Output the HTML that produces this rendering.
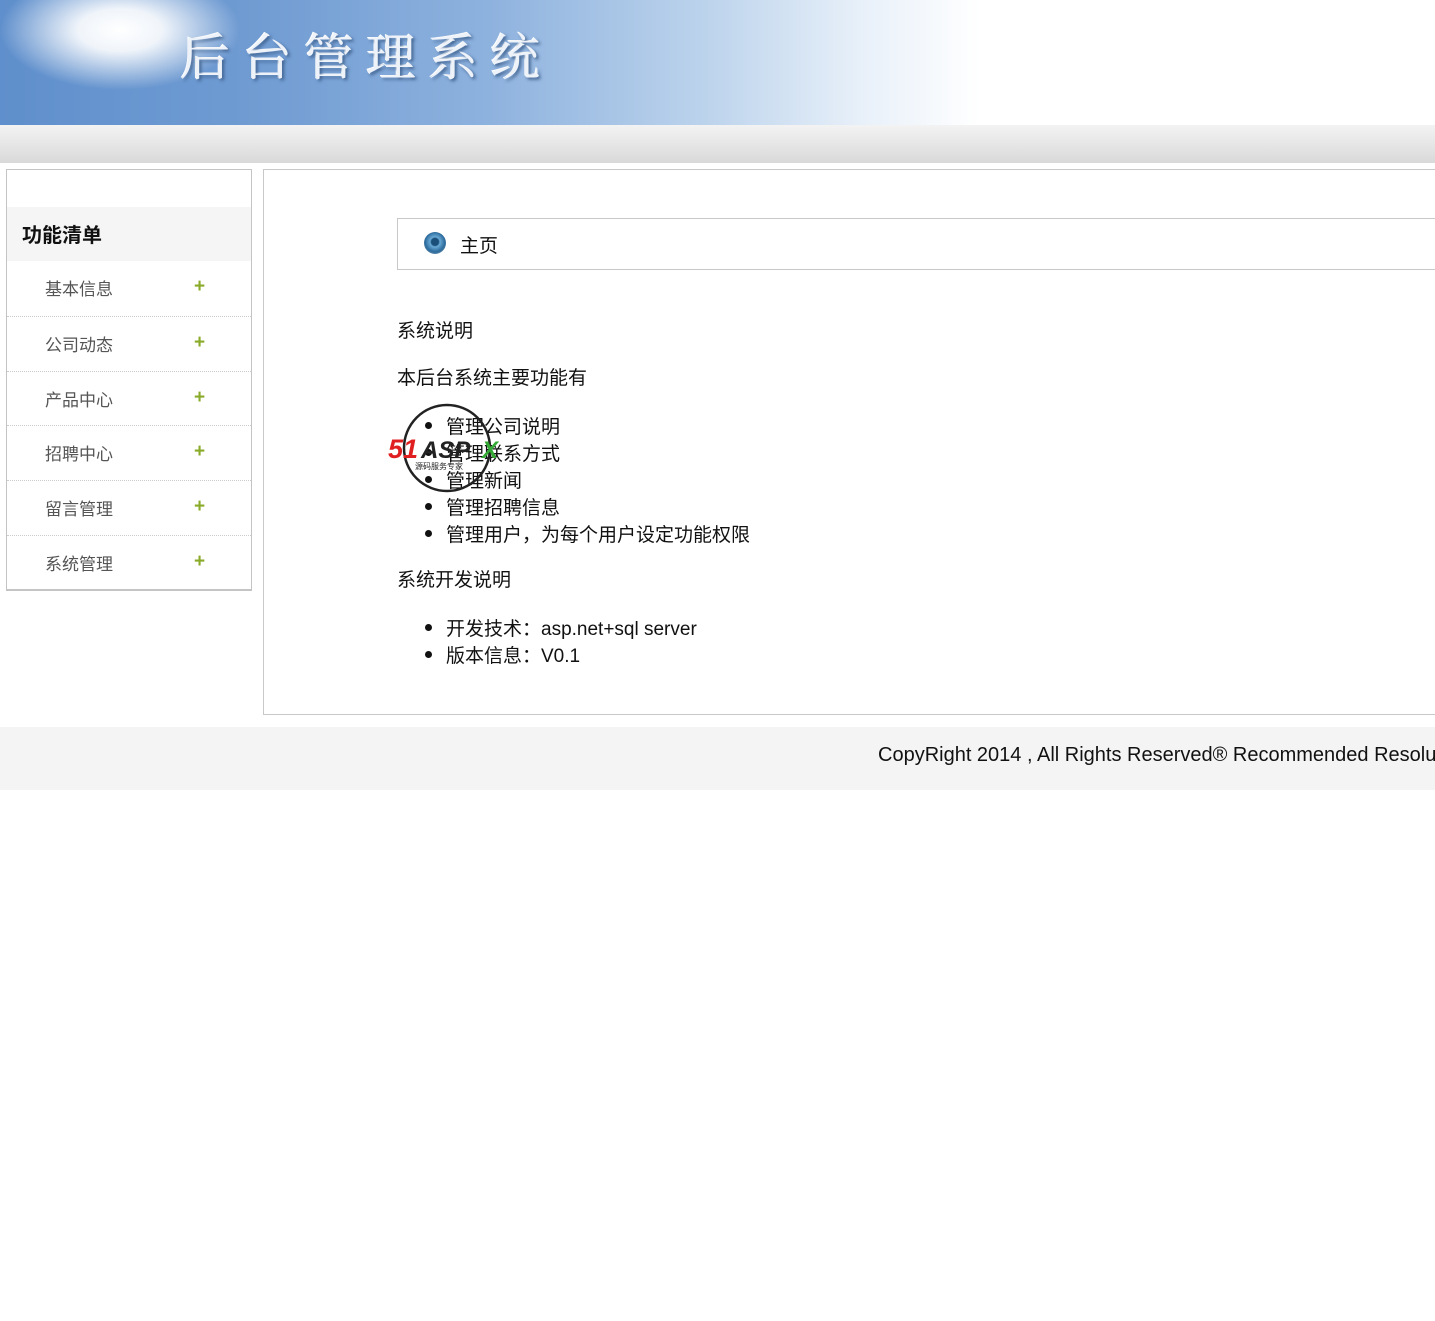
<!DOCTYPE html>
<html><head><meta charset="utf-8"><style>
*{margin:0;padding:0;box-sizing:border-box}
body{width:1435px;height:1321px;background:#fff;font-family:"Liberation Sans","Noto Sans CJK SC",sans-serif;position:relative;overflow:hidden}
.banner{position:absolute;left:0;top:0;width:1435px;height:125px;background:#fff}
.bimg{position:absolute;left:0;top:0;width:980px;height:125px;
background:radial-gradient(ellipse 120px 60px at 120px 30px,#fff 0%,rgba(255,255,255,.9) 35%,rgba(255,255,255,0) 100%),
linear-gradient(90deg,#5f8fcc 0%,#6f9bd2 25%,#8eb2de 50%,#bcd3ec 72%,#e8f0f9 88%,#fff 100%)}
.btitle{position:absolute;left:180px;top:18px;font-family:"Noto Serif CJK SC","Liberation Serif",serif;font-size:50px;letter-spacing:12px;color:#eef3fa;text-shadow:2px 2px 3px #3d5f8c,-1px -1px 0 #fff}
.bar{position:absolute;left:0;top:125px;width:1435px;height:38px;background:linear-gradient(#f3f3f3,#d9d9d9)}
.side{position:absolute;left:6px;top:169px;width:246px;height:422px;border:1px solid #c4c4c4;border-bottom:2px solid #c4c4c4}
.sh{position:absolute;left:0;top:37px;width:244px;height:54px;background:#f5f5f5;font-weight:bold;font-size:20px;padding:12px 0 0 15px;color:#111}
.it{position:absolute;left:0;width:244px;height:55px;border-top:1px dotted #ccc;font-size:17px;color:#555;padding:14px 0 0 38px}
.it b{position:absolute;left:187px;top:15px;color:#8aab2a;font-size:19px}
.main{position:absolute;left:263px;top:169px;width:1200px;height:546px;border:1px solid #c8c8c8}
.crumb{position:absolute;left:133px;top:48px;width:1100px;height:52px;border:1px solid #c8c8c8;font-size:19px;padding:12px 0 0 62px;color:#111}
.ico{position:absolute;left:26px;top:13px;width:22px;height:22px;border-radius:50%;background:radial-gradient(circle at 50% 45%,#1a4f7a 0 22%,#6aaad6 30%,#2c6b9c 60%,#9ab 100%)}
.c{position:absolute;left:133px;font-size:19px;color:#111;line-height:27px}
ul{list-style:disc;padding-left:49px}
li{height:27px}
li::marker{font-size:24px}
.foot{position:absolute;left:0;top:727px;width:1435px;height:63px;background:#f4f4f4;font-size:20px;color:#111;padding:17px 0 0 878px;white-space:nowrap}
.wm{position:absolute;left:388px;top:402px;width:120px;height:92px}
</style></head><body>
<div class="banner"><div class="bimg"></div><div class="btitle">后台管理系统</div></div>
<div class="bar"></div>
<div class="side">
<div class="sh">功能清单</div>
<div class="it" style="top:91px;border-top:none">基本信息<b>+</b></div>
<div class="it" style="top:146px">公司动态<b>+</b></div>
<div class="it" style="top:201px">产品中心<b>+</b></div>
<div class="it" style="top:255px">招聘中心<b>+</b></div>
<div class="it" style="top:310px">留言管理<b>+</b></div>
<div class="it" style="top:365px">系统管理<b>+</b></div>
</div>
<div class="main">
<div class="crumb"><span class="ico"></span>主页</div>
<div class="c" style="top:148px">系统说明</div>
<div class="c" style="top:195px">本后台系统主要功能有</div>
<div class="c" style="top:242px"><ul><li>管理公司说明</li><li>管理联系方式</li><li>管理新闻</li><li>管理招聘信息</li><li>管理用户，为每个用户设定功能权限</li></ul></div>
<div class="c" style="top:397px">系统开发说明</div>
<div class="c" style="top:444px"><ul><li>开发技术：asp.net+sql server</li><li>版本信息：V0.1</li></ul></div>
</div>
<svg class="wm" viewBox="0 0 120 92"><circle cx="59" cy="46" r="43" fill="none" stroke="#222" stroke-width="2.5"/><text x="0" y="56" font-family="Liberation Sans" font-weight="bold" font-style="italic" font-size="27" fill="#e02020">51</text><text x="33" y="56" font-family="Liberation Sans" font-weight="bold" font-style="italic" font-size="24" fill="#222">ASP</text><text x="94" y="56" font-family="Liberation Sans" font-weight="bold" font-style="italic" font-size="24" fill="#3a3">X</text><text x="27" y="67" font-family="Noto Sans CJK SC" font-size="8" fill="#222">源码服务专家</text></svg>
<div class="foot">CopyRight 2014 , All Rights Reserved® Recommended Resolution</div>
</body></html>
